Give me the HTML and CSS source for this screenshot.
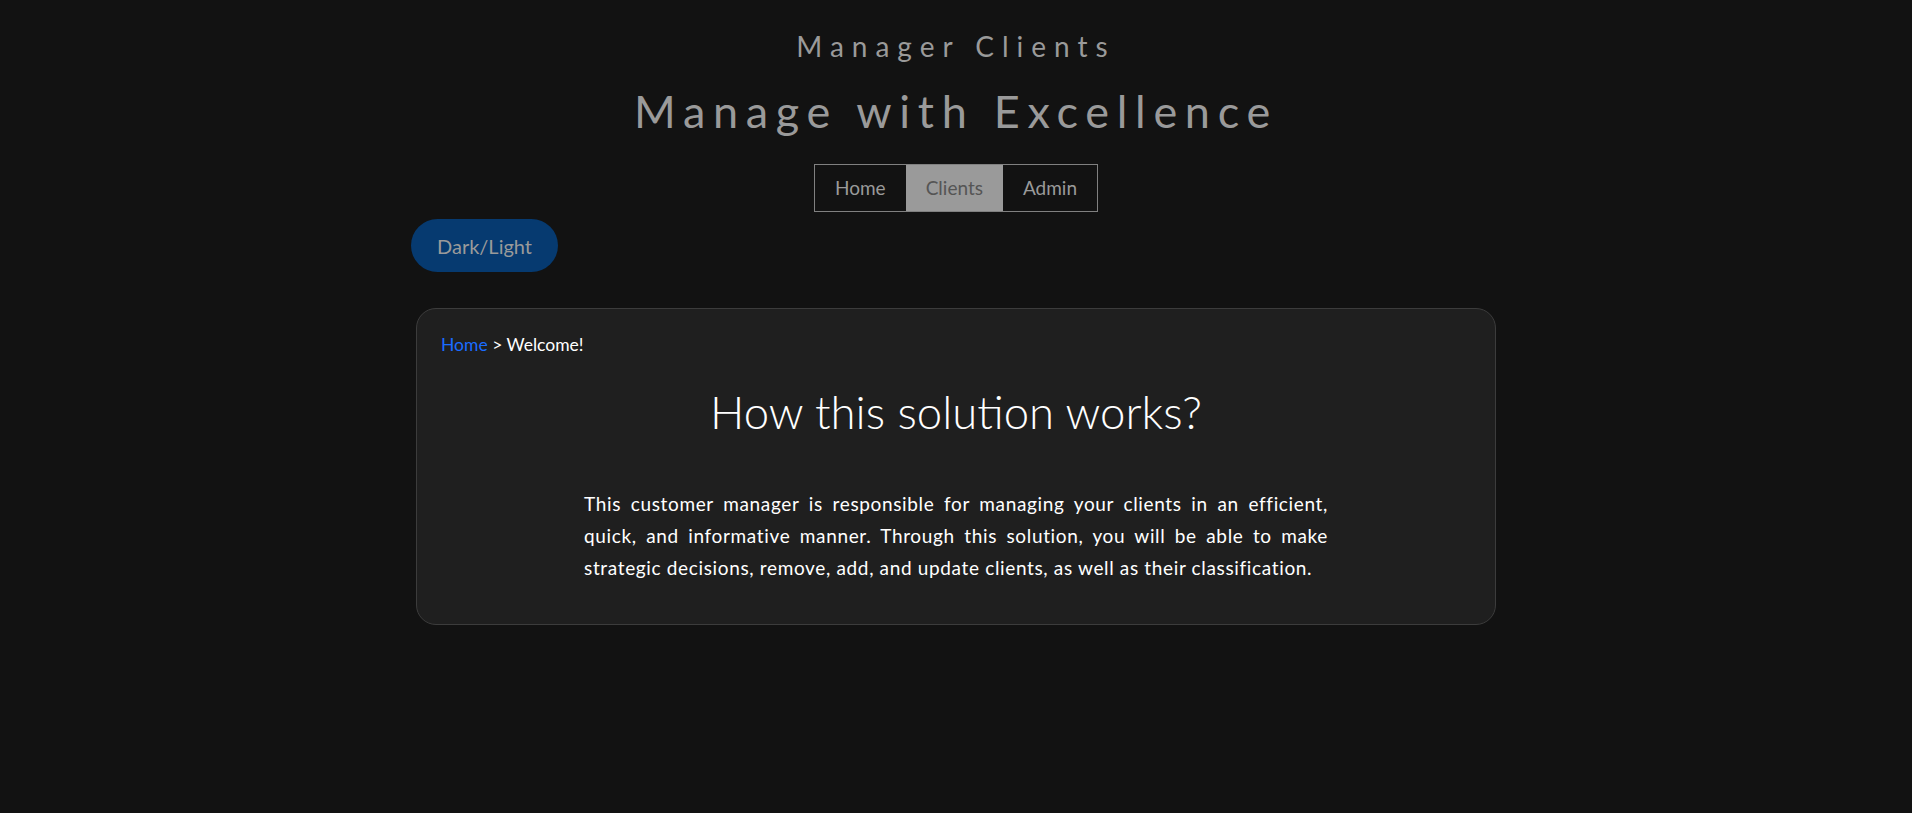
FILE: index.html
```html
<!DOCTYPE html>
<html lang="en">
<head>
<meta charset="utf-8">
<title>Manager Clients</title>
<link rel="stylesheet" href="styles.css">
</head>
<body>
<header class="site-header">
  <h2 class="subtitle">Manager Clients</h2>
  <h1 class="title">Manage with Excellence</h1>
  <nav class="nav">
    <a class="nav-item" href="#">Home</a>
    <a class="nav-item active" href="#">Clients</a>
    <a class="nav-item" href="#">Admin</a>
  </nav>
</header>
<main class="container">
  <button class="theme-btn" type="button">Dark/Light</button>
  <section class="card">
    <div class="breadcrumb"><a href="#" class="crumb-link">Home</a> &gt; Welcome!</div>
    <h3 class="card-title">How this solution works?</h3>
    <p class="card-text">This customer manager is responsible for managing your clients in an efficient, quick, and informative manner. Through this solution, you will be able to make strategic decisions, remove, add, and update clients, as well as their classification.</p>
  </section>
</main>
</body>
</html>
```
FILE: styles.css
```css
* { box-sizing: border-box; }
html, body { margin: 0; padding: 0; }
body {
  background: #121212;
  font-family: Lato, "Open Sans", sans-serif;
  color: #ffffff;
  min-height: 813px;
}
.site-header {
  display: flex;
  flex-direction: column;
  align-items: center;
  padding-top: 26px;
}
.subtitle {
  margin: 0;
  font-weight: 400;
  font-size: 28px;
  line-height: 40px;
  letter-spacing: 8px;
  color: #9a9a9a;
}
.title {
  margin: 18px 0 0;
  font-weight: 400;
  font-size: 45px;
  line-height: 54px;
  letter-spacing: 7.7px;
  color: #9a9a9a;
}
.nav {
  display: flex;
  margin-top: 26px;
  border: 1px solid #808080;
}
.nav-item {
  display: block;
  padding: 0 20px;
  height: 46px;
  line-height: 46px;
  font-size: 19px;
  color: #9a9a9a;
  text-decoration: none;
}
.nav-item.active {
  background: #9a9a9a;
  color: #555555;
}
.container {
  width: 1090px;
  margin: 7px auto 0;
  display: flex;
  flex-direction: column;
  align-items: flex-start;
}
.theme-btn {
  height: 53px;
  padding: 0 26px;
  border: none;
  border-radius: 27px;
  background: #063a70;
  color: #9a9a9a;
  font-family: Lato, "Open Sans", sans-serif;
  font-size: 20px;
}
.card {
  align-self: stretch;
  margin: 36px 5px 0;
  background: #1f1f1f;
  border: 1px solid #3c3c3c;
  border-radius: 20px;
  padding: 24px 24px 40px;
}
.breadcrumb {
  font-size: 17.5px;
  line-height: 24px;
  color: #ffffff;
}
.crumb-link {
  color: #1a6cff;
  text-decoration: none;
}
.card-title {
  margin: 27px 0 0;
  text-align: center;
  font-weight: 300;
  font-size: 45.5px;
  line-height: 56px;
}
.card-text {
  width: 744px;
  margin: 48px auto 0;
  font-size: 19px;
  letter-spacing: 0.65px;
  line-height: 32px;
  text-align: justify;
}
```
